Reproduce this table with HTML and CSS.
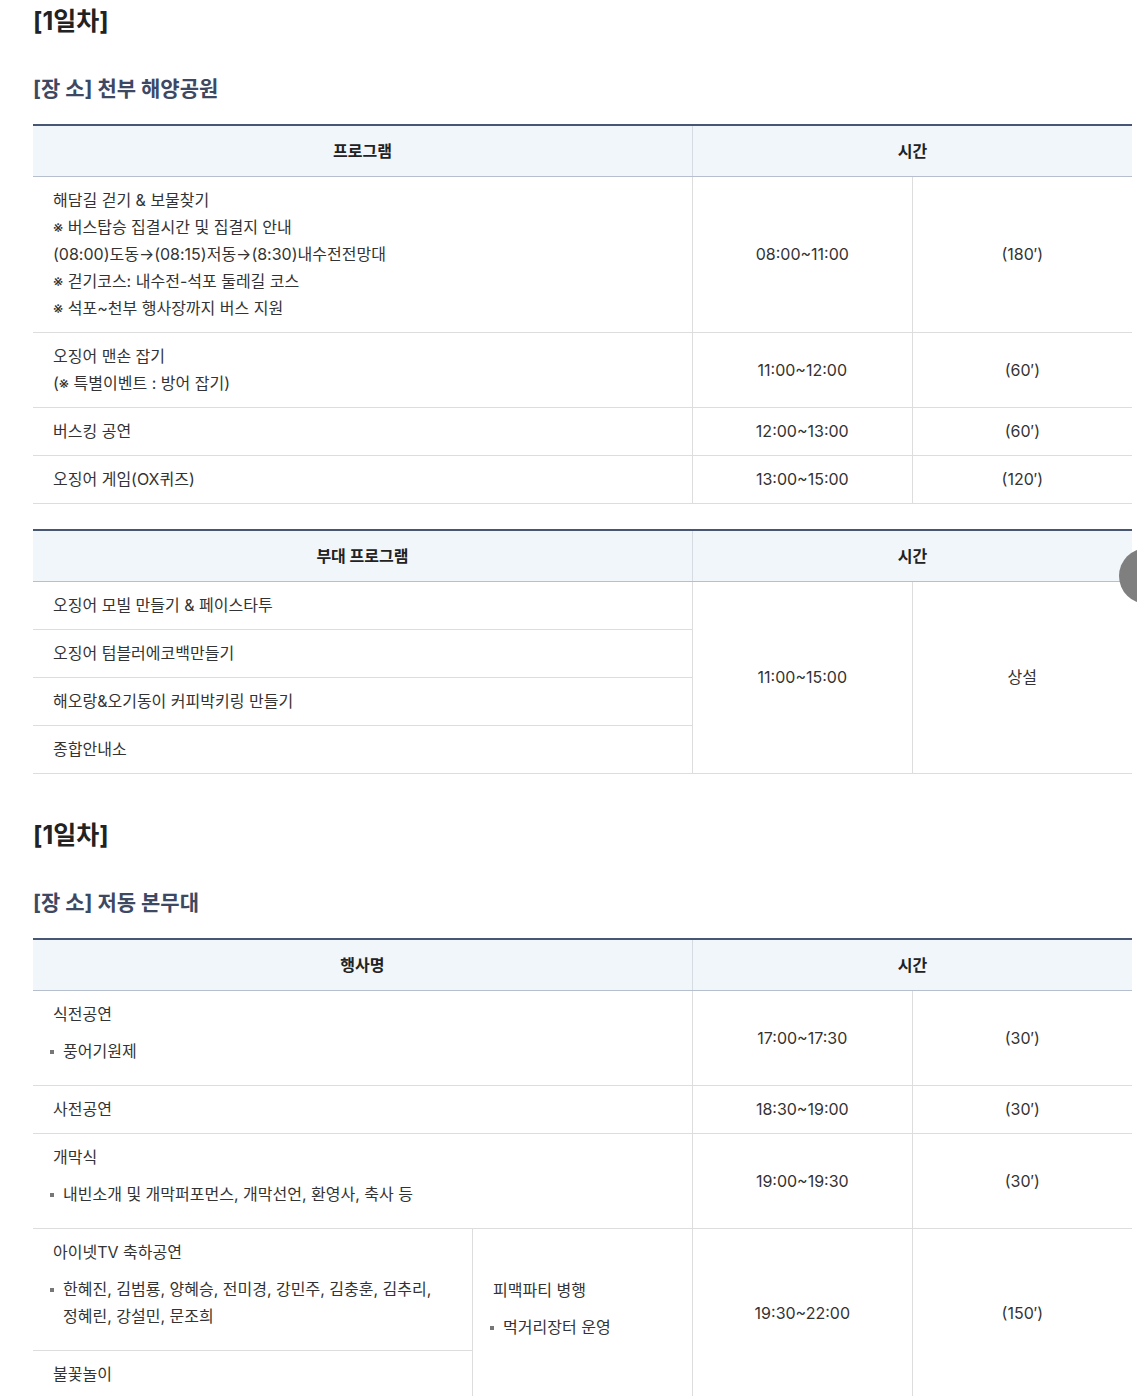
FILE: index.html
```html
<!DOCTYPE html>
<html lang="ko">
<head>
    <meta charset="UTF-8">
    <meta name="viewport" content="width=device-width, initial-scale=1.0">
    <title>행사 일정</title>
    <link rel="stylesheet" href="styles.css">
</head>
<body>
    <div class="schedule">
        <h3 class="day-title">[1일차]</h3>
        <h4 class="place-title">[장 소] 천부 해양공원</h4>

        <table class="tbl">
            <colgroup>
                <col class="col-main">
                <col class="col-time">
                <col class="col-time">
            </colgroup>
            <thead>
                <tr>
                    <th>프로그램</th>
                    <th colspan="2">시간</th>
                </tr>
            </thead>
            <tbody>
                <tr>
                    <td class="left">
                        해담길 걷기 &amp; 보물찾기<br>
                        ※ 버스탑승 집결시간 및 집결지 안내<br>
                        (08:00)도동→(08:15)저동→(8:30)내수전전망대<br>
                        ※ 걷기코스: 내수전-석포 둘레길 코스<br>
                        ※ 석포~천부 행사장까지 버스 지원
                    </td>
                    <td>08:00~11:00</td>
                    <td>(180′)</td>
                </tr>
                <tr>
                    <td class="left">오징어 맨손 잡기<br>(※ 특별이벤트 : 방어 잡기)</td>
                    <td>11:00~12:00</td>
                    <td>(60′)</td>
                </tr>
                <tr>
                    <td class="left">버스킹 공연</td>
                    <td>12:00~13:00</td>
                    <td>(60′)</td>
                </tr>
                <tr>
                    <td class="left">오징어 게임(OX퀴즈)</td>
                    <td>13:00~15:00</td>
                    <td>(120′)</td>
                </tr>
            </tbody>
        </table>

        <table class="tbl">
            <colgroup>
                <col class="col-main">
                <col class="col-time">
                <col class="col-time">
            </colgroup>
            <thead>
                <tr>
                    <th>부대 프로그램</th>
                    <th colspan="2">시간</th>
                </tr>
            </thead>
            <tbody>
                <tr>
                    <td class="left">오징어 모빌 만들기 &amp; 페이스타투</td>
                    <td rowspan="4">11:00~15:00</td>
                    <td rowspan="4">상설</td>
                </tr>
                <tr>
                    <td class="left">오징어 텀블러에코백만들기</td>
                </tr>
                <tr>
                    <td class="left">해오랑&amp;오기동이 커피박키링 만들기</td>
                </tr>
                <tr>
                    <td class="left">종합안내소</td>
                </tr>
            </tbody>
        </table>

        <h3 class="day-title day-second">[1일차]</h3>
        <h4 class="place-title">[장 소] 저동 본무대</h4>

        <table class="tbl">
            <colgroup>
                <col class="col-half">
                <col class="col-time">
                <col class="col-time">
                <col class="col-time">
            </colgroup>
            <thead>
                <tr>
                    <th colspan="2">행사명</th>
                    <th colspan="2">시간</th>
                </tr>
            </thead>
            <tbody>
                <tr>
                    <td class="left" colspan="2">
                        <p>식전공연</p>
                        <ul class="dot-list">
                            <li>풍어기원제</li>
                        </ul>
                    </td>
                    <td>17:00~17:30</td>
                    <td>(30′)</td>
                </tr>
                <tr>
                    <td class="left" colspan="2">사전공연</td>
                    <td>18:30~19:00</td>
                    <td>(30′)</td>
                </tr>
                <tr>
                    <td class="left" colspan="2">
                        <p>개막식</p>
                        <ul class="dot-list">
                            <li>내빈소개 및 개막퍼포먼스, 개막선언, 환영사, 축사 등</li>
                        </ul>
                    </td>
                    <td>19:00~19:30</td>
                    <td>(30′)</td>
                </tr>
                <tr>
                    <td class="left">
                        <p>아이넷TV 축하공연</p>
                        <ul class="dot-list">
                            <li>한혜진, 김범룡, 양혜승, 전미경, 강민주, 김충훈, 김추리,<br>정혜린, 강설민, 문조희</li>
                        </ul>
                    </td>
                    <td class="left" rowspan="2">
                        <p>피맥파티 병행</p>
                        <ul class="dot-list">
                            <li>먹거리장터 운영</li>
                        </ul>
                    </td>
                    <td rowspan="2">19:30~22:00</td>
                    <td rowspan="2">(150′)</td>
                </tr>
                <tr>
                    <td class="left">불꽃놀이</td>
                </tr>
            </tbody>
        </table>
    </div>

    <button class="float-btn" type="button" aria-label="위로"></button>
</body>
</html>
```

FILE: styles.css
```css
html, body {
    margin: 0;
    padding: 0;
}

body {
    font-family: 'Inter', 'Noto Sans CJK KR', sans-serif;
    color: #333;
    background-color: #fff;
    overflow: hidden;
}

.schedule {
    width: 1099px;
    padding-left: 33px;
}

.day-title {
    margin: 0;
    padding-top: 3px;
    font-size: 25px;
    line-height: 36px;
    font-weight: 700;
    color: #222;
}

.day-second {
    padding-top: 18px;
}

.place-title {
    margin: 34px 0 19px;
    font-size: 21px;
    line-height: 32px;
    font-weight: 700;
    color: #3d4963;
}

.tbl {
    width: 100%;
    table-layout: fixed;
    border-collapse: collapse;
    border-top: 2px solid #475672;
    margin-bottom: 25px;
    font-size: 16px;
}

.col-main {
    width: 60%;
}

.col-half {
    width: 40%;
}

.col-time {
    width: 20%;
}

.tbl th {
    height: 48px;
    padding: 0 0 2px;
    background-color: #f1f6fb;
    border-bottom: 1px solid #b7bfcf;
    border-left: 1px solid #d6dae3;
    font-weight: 700;
    color: #222;
    text-align: center;
}

.tbl th:first-child {
    border-left: none;
}

.tbl td {
    padding: 10px 20px;
    line-height: 27px;
    border-bottom: 1px solid #ddd;
    border-left: 1px solid #ddd;
    text-align: center;
    vertical-align: middle;
    color: #333;
}

.tbl td.left {
    text-align: left;
}

.tbl tr td:first-child {
    border-left: none;
}

.tbl td p {
    margin: 0;
}

.dot-list {
    list-style: none;
    margin: 10px 0;
    padding: 0;
}

.dot-list li {
    position: relative;
    padding-left: 10px;
}

.dot-list li::before {
    content: "";
    position: absolute;
    left: -3px;
    top: 12px;
    width: 4px;
    height: 4px;
    background-color: #777;
}

.float-btn {
    position: absolute;
    left: 1119px;
    top: 548px;
    width: 56px;
    height: 56px;
    padding: 0;
    border: none;
    border-radius: 50%;
    background-color: #7f7f7f;
}
```
